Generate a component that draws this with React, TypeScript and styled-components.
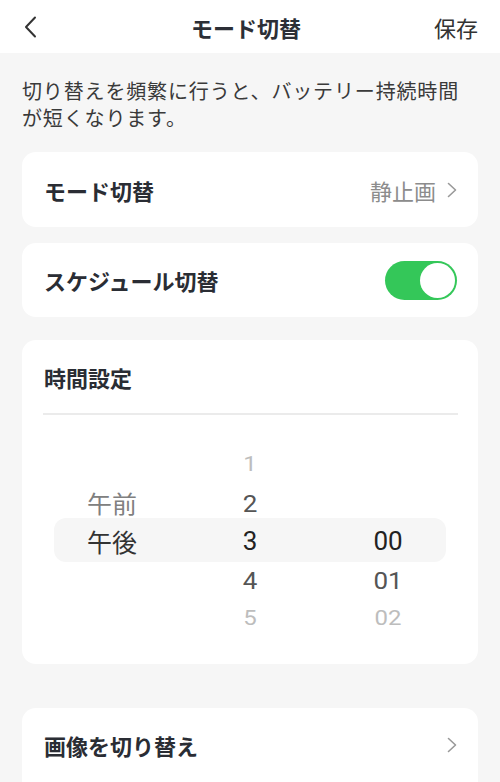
import React from "react";
import styled, { createGlobalStyle } from "styled-components";

const Global = createGlobalStyle`
  html, body { margin: 0; padding: 0; background: #f6f6f6; }
  body { font-family: "Noto Sans CJK JP", "Noto Sans", sans-serif; -webkit-font-smoothing: antialiased; }
  * { box-sizing: border-box; }
`;

const Page = styled.div`
  width: 500px;
  height: 782px;
  overflow: hidden;
  background: #f6f6f6;
`;

const Header = styled.header`
  height: 53px;
  background: #fff;
  display: grid;
  grid-template-columns: 1fr auto 1fr;
  align-items: center;
  padding: 0 22px 0 24px;
`;

const BackButton = styled.div`
  display: flex;
  align-items: center;
  justify-self: start;
`;

const Title = styled.h1`
  margin: 0;
  padding-right: 10px;
  font-size: 22px;
  font-weight: 700;
  color: #2c2f36;
  line-height: 30px;
`;

const Save = styled.div`
  justify-self: end;
  font-size: 22px;
  color: #333;
  line-height: 30px;
`;

const Notice = styled.p`
  margin: 0;
  padding: 24px 22px 21px;
  font-size: 20px;
  line-height: 27px;
  letter-spacing: 0.85px;
  color: #3a3a3a;
`;

const Card = styled.section<{ $gap?: number; $height?: number; $padBottom?: number }>`
  display: flow-root;
  margin: ${(p) => p.$gap ?? 0}px 22px 0;
  padding-bottom: ${(p) => p.$padBottom ?? 0}px;
  background: #fff;
  border-radius: 14px;
  ${(p) => (p.$height ? `height: ${p.$height}px;` : "")}
`;

const Row = styled.div<{ $height: number }>`
  height: ${(p) => p.$height}px;
  display: flex;
  align-items: center;
  justify-content: space-between;
  padding: 0 21px 0 22px;
`;

const RowLabel = styled.div`
  font-size: 22px;
  font-weight: 700;
  color: #2a2d34;
  line-height: 30px;
`;

const RowValue = styled.div`
  display: flex;
  align-items: center;
  gap: 11px;
  font-size: 22px;
  color: #8c8c8c;
  line-height: 30px;
`;

const Toggle = styled.div<{ $on: boolean }>`
  width: 72px;
  height: 39px;
  border-radius: 20px;
  background: ${(p) => (p.$on ? "#34c759" : "#e5e5e5")};
  display: flex;
  align-items: center;
  justify-content: ${(p) => (p.$on ? "flex-end" : "flex-start")};
  padding: 2px;
`;

const Knob = styled.div`
  width: 35px;
  height: 35px;
  border-radius: 50%;
  background: #fff;
`;

const SectionTitle = styled.div`
  padding: 22px 21px 0 22px;
  font-size: 22px;
  font-weight: 700;
  line-height: 30px;
  color: #2a2d34;
`;

const Divider = styled.hr`
  margin: 21px 20px 0 21px;
  border: none;
  height: 2px;
  background: #ebebeb;
`;

const Picker = styled.div`
  position: relative;
  margin: 30px 21px 0 21px;
  display: grid;
  grid-template-columns: repeat(3, 1fr);
`;

const Highlight = styled.div`
  position: absolute;
  left: 11px;
  right: 11px;
  top: 73px;
  height: 44px;
  border-radius: 12px;
  background: #f6f6f6;
`;

const Column = styled.div`
  position: relative;
  display: flex;
  flex-direction: column;
`;

type Level = 0 | 1 | 2 | -1;

const colors: Record<string, string> = {
  "0": "#222",
  "1": "#555",
  "2": "#bdbdbd",
};

const Cell = styled.div<{ $level: Level; $cjk?: boolean }>`
  height: 38.5px;
  display: flex;
  align-items: center;
  justify-content: center;
  font-family: ${(p) => (p.$cjk ? `"Noto Sans CJK JP", sans-serif` : `Roboto, "Noto Sans", sans-serif`)};
  font-size: ${(p) => (p.$cjk ? 25 : p.$level === 2 ? 24 : 26)}px;
  color: ${(p) => (p.$level === -1 ? "transparent" : colors[String(p.$level)])};
  transform: scaleY(${(p) => (p.$level === 2 ? 0.87 : p.$level === 1 ? 0.95 : 1)});
`;

const PeriodCell = styled(Cell)<{ $dim?: boolean }>`
  color: ${(p) => (p.$dim ? "#808080" : "#333")};
`;

const Chevron = ({ color = "#999", w = 10, h = 16, sw = 1.6 }: { color?: string; w?: number; h?: number; sw?: number }) => (
  <svg width={w} height={h} viewBox={`0 0 ${w} ${h}`} fill="none">
    <polyline points={`1.5,1.5 ${w - 1.5},${h / 2} 1.5,${h - 1.5}`} stroke={color} strokeWidth={sw} strokeLinecap="round" strokeLinejoin="round" />
  </svg>
);

const BackIcon = () => (
  <svg width="13" height="22" viewBox="0 0 13 22" fill="none">
    <polyline points="11,1.5 2,11 11,20.5" stroke="#333" strokeWidth="2" strokeLinecap="round" strokeLinejoin="round" />
  </svg>
);

const hours: { t: string; l: Level }[] = [
  { t: "1", l: 2 },
  { t: "2", l: 1 },
  { t: "3", l: 0 },
  { t: "4", l: 1 },
  { t: "5", l: 2 },
];

const minutes: { t: string; l: Level }[] = [
  { t: "", l: -1 },
  { t: "", l: -1 },
  { t: "00", l: 0 },
  { t: "01", l: 1 },
  { t: "02", l: 2 },
];

export default function App() {
  return (
    <Page>
      <Global />
      <Header>
        <BackButton>
          <BackIcon />
        </BackButton>
        <Title>モード切替</Title>
        <Save>保存</Save>
      </Header>
      <Notice>
        切り替えを頻繁に行うと、バッテリー持続時間
        <br />
        が短くなります。
      </Notice>
      <Card>
        <Row $height={75}>
          <RowLabel>モード切替</RowLabel>
          <RowValue>
            静止画
            <Chevron />
          </RowValue>
        </Row>
      </Card>
      <Card $gap={16}>
        <Row $height={74}>
          <RowLabel>スケジュール切替</RowLabel>
          <Toggle $on>
            <Knob />
          </Toggle>
        </Row>
      </Card>
      <Card $gap={23} $padBottom={26}>
        <SectionTitle>時間設定</SectionTitle>
        <Divider />
        <Picker>
          <Highlight />
          <Column>
            <Cell $level={-1} $cjk />
            <PeriodCell $level={1} $cjk $dim>午前</PeriodCell>
            <PeriodCell $level={0} $cjk>午後</PeriodCell>
            <Cell $level={-1} $cjk />
            <Cell $level={-1} $cjk />
          </Column>
          <Column>
            {hours.map((h) => (
              <Cell key={h.t} $level={h.l}>{h.t}</Cell>
            ))}
          </Column>
          <Column>
            {minutes.map((m, i) => (
              <Cell key={i} $level={m.l}>{m.t}</Cell>
            ))}
          </Column>
        </Picker>
      </Card>
      <Card $gap={44} $height={90}>
        <Row $height={75}>
          <RowLabel>画像を切り替え</RowLabel>
          <Chevron />
        </Row>
      </Card>
    </Page>
  );
}
